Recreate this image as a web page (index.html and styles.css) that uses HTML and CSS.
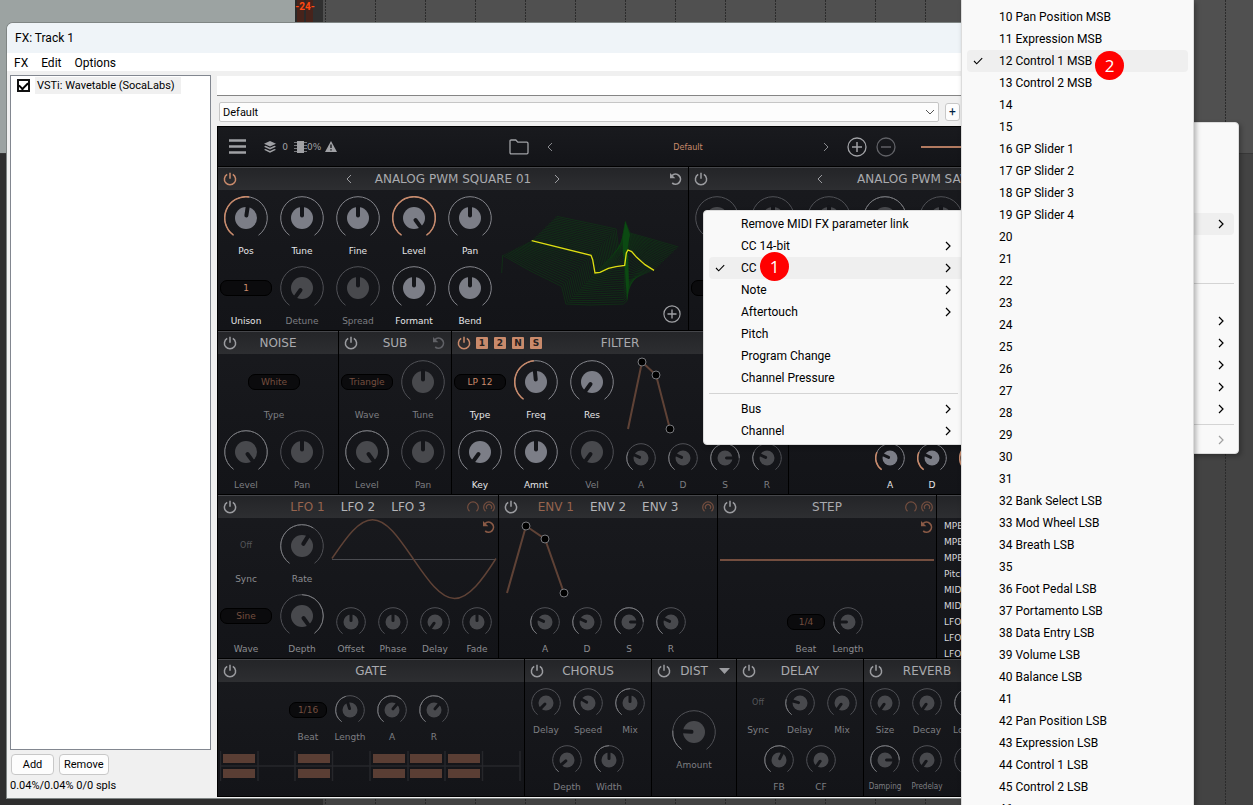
FILE: index.html
```html
<!DOCTYPE html>
<html lang="en">
<head>
<meta charset="utf-8">
<title>FX: Track 1</title>
<link rel="stylesheet" href="styles.css">
</head>
<body>
<svg class="defs" aria-hidden="true">
  <symbol id="power" viewBox="0 0 14 14"><path d="M4.2 2.4a5.6 5.6 0 1 0 5.6 0M7 .8v6" fill="none" stroke="currentColor" stroke-width="1.5"/></symbol>
  <symbol id="reset" viewBox="0 0 14 14"><path d="M3 3.6A5 5 0 1 1 3.2 11" fill="none" stroke="currentColor" stroke-width="1.7"/><path d="M1 1v5.3h5.3z" fill="currentColor"/></symbol>
  <symbol id="left" viewBox="0 0 6 10"><path d="M5 1 1 5l4 4" fill="none" stroke="currentColor"/></symbol>
  <symbol id="right" viewBox="0 0 6 10"><path d="m1 1 4 4-4 4" fill="none" stroke="currentColor"/></symbol>
  <symbol id="chev" viewBox="0 0 6 10"><path d="m1 1 4 4-4 4" fill="none" stroke="currentColor" stroke-width="1.2"/></symbol>
  <symbol id="check" viewBox="0 0 10 8"><path d="m1 4 2.7 2.8L9.2 1.2" fill="none" stroke="currentColor" stroke-width="1.1"/></symbol>
  <symbol id="plus" viewBox="0 0 20 20"><circle cx="10" cy="10" r="9" fill="none" stroke="currentColor" stroke-width="1.3"/><path d="M10 5v10M5 10h10" stroke="currentColor" stroke-width="1.5"/></symbol>
  <symbol id="minus" viewBox="0 0 20 20"><circle cx="10" cy="10" r="9" fill="none" stroke="currentColor" stroke-width="1.3"/><path d="M5 10h10" stroke="currentColor" stroke-width="1.5"/></symbol>
  <symbol id="arc" viewBox="0 0 12 12"><path d="M2.5 10.2a5.3 5.3 0 1 1 7 0" fill="none" stroke="currentColor" stroke-width="1.2"/></symbol>
  <symbol id="arcs" viewBox="0 0 12 12"><path d="M2.5 10.2a5.3 5.3 0 1 1 7 0M4 7.8a2.6 2.6 0 1 1 4 0" fill="none" stroke="currentColor" stroke-width="1.2"/></symbol>
</svg>

<main class="desktop">
  <div class="arrange-top"><div class="mixer"></div><div class="meter"><span>-24-</span></div><div class="lanes"></div></div>
  <div class="arrange-bottom"><div class="tracks"></div><div class="lanes"></div></div>

  <section class="window">
    <header class="titlebar">FX: Track 1</header>
    <nav class="menubar"><button>FX</button><button>Edit</button><button>Options</button></nav>
    <div class="body">
      <aside class="chain">
        <div class="fxlist">
          <label class="fxitem"><input type="checkbox" checked><span>VSTi: Wavetable (SocaLabs)</span></label>
        </div>
        <div class="actions"><button>Add</button><button>Remove</button></div>
        <div class="status">0.04%/0.04% 0/0 spls</div>
      </aside>

      <div class="plugin">
        <input class="comment" type="text" aria-label="Comment">
        <div class="preset">
          <div class="combo"><select aria-label="Preset"><option>Default</option></select><svg viewBox="0 0 10 6"><path d="m1 1 4 4 4-4" fill="none" stroke="#555"/></svg></div>
          <button>+</button>
        </div>

        <div class="synth">
          <div class="topbar">
            <div class="top-left">
              <button class="ico" aria-label="Menu"><svg width="17" height="15" viewBox="0 0 17 15"><path d="M0 1.5h17M0 7.5h17M0 13.5h17" stroke="currentColor" stroke-width="2.4"/></svg></button>
              <svg class="layers" width="12" height="12" viewBox="0 0 12 12" fill="currentColor"><path d="M6 0 12 2.8 6 5.6 0 2.8z"/><path d="m1.6 4.8 4.4 2 4.4-2L12 5.7 6 8.5 0 5.7z"/><path d="m1.6 7.9 4.4 2 4.4-2 1.6.9-6 2.9-6-2.9z"/></svg>
              <span class="num">0</span>
              <svg width="13" height="12" viewBox="0 0 13 12"><path d="M3 0h7v12H3z" fill="currentColor"/><path d="M0 1.5h13M0 4.5h13M0 7.5h13M0 10.5h13" stroke="currentColor" opacity=".7"/></svg>
              <span>0%</span>
              <svg class="warn" width="12" height="11" viewBox="0 0 12 11"><path d="M6 0 12 11H0z" fill="currentColor"/><path d="M6 3.5v3.6M6 8.2v1.4" stroke="#16171b" stroke-width="1.4"/></svg>
            </div>
            <button class="ico" aria-label="Open"><svg width="20" height="16" viewBox="0 0 20 16"><path d="M1 13.5V2.2Q1 1 2.2 1h4.6l2 2.2h9q1.2 0 1.2 1.2v9.2q0 1.2-1.2 1.2H2.2Q1 14.8 1 13.5z" fill="none" stroke="currentColor" stroke-width="1.3"/></svg></button>
            <div class="program"><button class="ico" aria-label="Previous"><svg width="6" height="10"><use href="#left"/></svg></button><span>Default</span><button class="ico" aria-label="Next"><svg width="6" height="10"><use href="#right"/></svg></button></div>
            <button class="ico" aria-label="Add preset"><svg width="20" height="20"><use href="#plus"/></svg></button>
            <button class="ico faint" aria-label="Delete preset"><svg width="20" height="20"><use href="#minus"/></svg></button>
            <div class="volume"></div>
          </div>

          <div class="row row-osc">
            <section class="panel lit">
              <header class="head"><button class="ico hot" aria-label="Power"><svg width="14" height="14"><use href="#power"/></svg></button>
                <div class="wave"><button class="ico" aria-label="Previous"><svg width="6" height="10"><use href="#left"/></svg></button><h2>ANALOG PWM SQUARE 01</h2><button class="ico" aria-label="Next"><svg width="6" height="10"><use href="#right"/></svg></button></div>
                <div class="end"><button class="ico" aria-label="Reset"><svg width="14" height="14"><use href="#reset"/></svg></button></div></header>
              <div class="osc">
                <div class="knobs five">
                  <label class="knob" data-v=".53" data-from="0">Pos</label><label class="knob" data-v=".5">Tune</label><label class="knob" data-v=".5">Fine</label><label class="knob" data-v="1" data-from="0">Level</label><label class="knob" data-v=".5">Pan</label>
                  <div class="choice"><button>1</button><span>Unison</span></div><label class="knob dim" data-v="0">Detune</label><label class="knob dim" data-v=".5">Spread</label><label class="knob" data-v=".5">Formant</label><label class="knob" data-v=".5">Bend</label>
                </div>
                <div class="plot"><svg id="wavetable" width="182" height="104" viewBox="30 250 546 312"></svg><button class="ico more" aria-label="Add"><svg width="18" height="18" viewBox="0 0 20 20"><use href="#plus"/></svg></button></div>
              </div>
            </section>
            <section class="panel">
              <header class="head"><button class="ico" aria-label="Power"><svg width="14" height="14"><use href="#power"/></svg></button>
                <div class="wave"><button class="ico" aria-label="Previous"><svg width="6" height="10"><use href="#left"/></svg></button><h2>ANALOG PWM SAW 01</h2><button class="ico" aria-label="Next"><svg width="6" height="10"><use href="#right"/></svg></button></div><div class="end"></div></header>
              <div class="osc">
                <div class="knobs five">
                  <label class="knob" data-v="0"></label><label class="knob" data-v=".5"></label><label class="knob" data-v=".5"></label><label class="knob" data-v="1" data-from="0"></label><label class="knob" data-v=".5"></label>
                  <div class="choice"><button aria-label="Unison"></button></div>
                </div>
              </div>
            </section>
          </div>

          <div class="row row-filter">
            <section class="panel">
              <header class="head"><button class="ico" aria-label="Power"><svg width="14" height="14"><use href="#power"/></svg></button><h2>NOISE</h2><div class="end"></div></header>
              <div class="knobs pair">
                <div class="choice wide"><button>White</button><span>Type</span></div>
                <label class="knob" data-v="1" data-from="0">Level</label><label class="knob" data-v=".5">Pan</label>
              </div>
            </section>
            <section class="panel">
              <header class="head"><button class="ico" aria-label="Power"><svg width="14" height="14"><use href="#power"/></svg></button><h2>SUB</h2><div class="end"><button class="ico faint" aria-label="Reset"><svg width="14" height="14"><use href="#reset"/></svg></button></div></header>
              <div class="knobs pair">
                <div class="choice"><button>Triangle</button><span>Wave</span></div><label class="knob" data-v=".5">Tune</label>
                <label class="knob" data-v="1" data-from="0">Level</label><label class="knob" data-v=".5">Pan</label>
              </div>
            </section>
            <section class="panel lit">
              <header class="head"><div class="start"><button class="ico hot" aria-label="Power"><svg width="14" height="14"><use href="#power"/></svg></button><button class="route">1</button><button class="route">2</button><button class="route">N</button><button class="route">S</button></div><h2>FILTER</h2><div class="end"></div></header>
              <div class="split">
                <div class="knobs three">
                  <div class="choice"><button>LP 12</button><span>Type</span></div><label class="knob" data-v=".48" data-from="0">Freq</label><label class="knob" data-v="0">Res</label>
                  <label class="knob" data-v="0">Key</label><label class="knob" data-v=".5">Amnt</label><label class="knob dim" data-v="0">Vel</label>
                </div>
                <div class="stack">
                  <svg class="graph" width="168" height="83" viewBox="0 -1 168 83"><path class="env" d="M8 74 22 7 36 20 50 74"/><circle cx="22" cy="7" r="4"/><circle cx="36" cy="20" r="4"/><circle cx="50" cy="74" r="4"/></svg>
                  <div class="smalls"><label class="knob sm dim" data-v=".27" data-from="0">A</label><label class="knob sm dim" data-v=".27" data-from="0">D</label><label class="knob sm dim" data-v=".81" data-from="0">S</label><label class="knob sm dim" data-v=".27" data-from="0">R</label></div>
                </div>
              </div>
            </section>
            <section class="panel lit">
              <header class="head"></header>
              <div class="stack">
                <div class="graph-space"></div>
                <div class="smalls"><label class="knob sm" data-v=".27" data-from="0">A</label><label class="knob sm" data-v=".27" data-from="0">D</label><label class="knob sm" data-v=".81" data-from="0">S</label><label class="knob sm" data-v=".27" data-from="0">R</label></div>
              </div>
            </section>
            <section class="panel"><header class="head"></header></section>
          </div>

          <div class="row row-mod">
            <section class="panel">
              <header class="head"><button class="ico" aria-label="Power"><svg width="14" height="14"><use href="#power"/></svg></button><div class="tabs"><button class="sel">LFO 1</button><button>LFO 2</button><button>LFO 3</button></div><div class="end rust"><svg width="12" height="12"><use href="#arc"/></svg><svg width="12" height="12"><use href="#arcs"/></svg></div></header>
              <div class="split">
                <div class="knobs pair">
                  <div class="choice plain"><button>Off</button><span>Sync</span></div><label class="knob" data-v=".61" data-from="0">Rate</label>
                  <div class="choice"><button>Sine</button><span>Wave</span></div><label class="knob" data-v="1" data-from=".5">Depth</label>
                </div>
                <div class="stack">
                  <svg class="graph" width="168" height="83" viewBox="0 -1 168 83"><path d="M2 40.5h164" stroke="#4a4b50" fill="none"/><path class="env thin" d="M2 39.5C15.4 20 28 .8 42.5.8S69.6 20 83 39.5 110 79.5 124.5 79.5 153 60 166 39.5"/></svg>
                  <div class="smalls"><label class="knob sm" data-v=".5">Offset</label><label class="knob sm" data-v=".5">Phase</label><label class="knob sm" data-v="0">Delay</label><label class="knob sm" data-v=".5">Fade</label></div>
                  <button class="ico again" aria-label="Reset"><svg width="14" height="14"><use href="#reset"/></svg></button>
                </div>
              </div>
            </section>
            <section class="panel">
              <header class="head"><button class="ico" aria-label="Power"><svg width="14" height="14"><use href="#power"/></svg></button><div class="tabs"><button class="sel">ENV 1</button><button>ENV 2</button><button>ENV 3</button></div><div class="end rust"><svg width="12" height="12"><use href="#arcs"/></svg></div></header>
              <div class="stack">
                <svg class="graph" width="168" height="83" viewBox="0 -1 168 83"><path class="env" d="M8 74 27 7 46 20 65 74"/><circle cx="27" cy="7" r="4"/><circle cx="46" cy="20" r="4"/><circle cx="65" cy="74" r="4"/></svg>
                <div class="smalls"><label class="knob sm" data-v=".27" data-from="0">A</label><label class="knob sm" data-v=".27" data-from="0">D</label><label class="knob sm" data-v=".81" data-from="0">S</label><label class="knob sm" data-v=".27" data-from="0">R</label></div>
              </div>
            </section>
            <section class="panel">
              <header class="head"><button class="ico" aria-label="Power"><svg width="14" height="14"><use href="#power"/></svg></button><h2>STEP</h2><div class="end rust"><svg width="12" height="12"><use href="#arc"/></svg><svg width="12" height="12"><use href="#arcs"/></svg></div></header>
              <div class="stack">
                <div class="steps"></div>
                <div class="smalls"><div class="choice sm"><button>1/4</button><span>Beat</span></div><label class="knob sm" data-v=".19" data-from="0">Length</label></div>
                <button class="ico again" aria-label="Reset"><svg width="14" height="14"><use href="#reset"/></svg></button>
              </div>
            </section>
            <section class="panel">
              <header class="head"></header>
              <ul class="matrix"><li>MPE Press</li><li>MPE Slide</li><li>MPE Lift</li><li>Pitch</li><li>MIDI CC</li><li>MIDI Key</li><li>LFO 1</li><li>LFO 2</li><li>LFO 3</li></ul>
            </section>
          </div>

          <div class="row row-fx">
            <section class="panel">
              <header class="head"><button class="ico" aria-label="Power"><svg width="14" height="14"><use href="#power"/></svg></button><h2>GATE</h2><div class="end"></div></header>
              <div class="gate">
                <div class="smalls"><div class="choice sm"><button>1/16</button><span>Beat</span></div><label class="knob sm" data-v=".44" data-from="0">Length</label><label class="knob sm" data-v=".64" data-from="0">A</label><label class="knob sm" data-v=".64" data-from="0">R</label></div>
                <svg width="301" height="30" viewBox="0 0 301 30"><path d="M0 15h300M.5 0v30M38 0v30M75 0v30M112.5 0v30M150 0v30M188 0v30M225 0v30M262.5 0v30M300 0v30" stroke="#26272b" stroke-width="1.5"/><path d="M3 3h32v9H3zM3 18h32v9H3zM78 3h32v9H78zM78 18h32v9H78zM153 3h32v9h-32zM153 18h32v9h-32zM190 3h32v9h-32zM190 18h32v9h-32zM228 3h32v9h-32zM228 18h32v9h-32z" fill="#5a3e34"/></svg>
              </div>
            </section>
            <section class="panel">
              <header class="head"><button class="ico" aria-label="Power"><svg width="14" height="14"><use href="#power"/></svg></button><h2>CHORUS</h2><div class="end"></div></header>
              <div class="smalls"><label class="knob sm" data-v=".03">Delay</label><label class="knob sm" data-v=".29" data-from="0">Speed</label><label class="knob sm" data-v=".5" data-from="0">Mix</label></div>
              <div class="smalls"><label class="knob sm" data-v=".05" data-from="0">Depth</label><label class="knob sm" data-v=".5" data-from="0">Width</label></div>
            </section>
            <section class="panel">
              <header class="head tight"><button class="ico" aria-label="Power"><svg width="14" height="14"><use href="#power"/></svg></button><h2>DIST</h2><button class="ico" aria-label="Type"><svg width="11" height="6" viewBox="0 0 11 6"><path d="M0 0h11L5.5 6z" fill="currentColor"/></svg></button></header>
              <div class="solo"><label class="knob" data-v=".2" data-from="0">Amount</label></div>
            </section>
            <section class="panel">
              <header class="head"><button class="ico" aria-label="Power"><svg width="14" height="14"><use href="#power"/></svg></button><h2>DELAY</h2><div class="end"></div></header>
              <div class="smalls"><div class="choice sm plain"><button>Off</button><span>Sync</span></div><label class="knob sm" data-v=".24" data-from="0">Delay</label><label class="knob sm" data-v="0">Mix</label></div>
              <div class="smalls"><label class="knob sm" data-v=".59" data-from="0">FB</label><label class="knob sm" data-v="0">CF</label></div>
            </section>
            <section class="panel">
              <header class="head"><button class="ico" aria-label="Power"><svg width="14" height="14"><use href="#power"/></svg></button><h2>REVERB</h2><div class="end"></div></header>
              <div class="smalls"><label class="knob sm" data-v="0">Size</label><label class="knob sm" data-v="0">Decay</label><label class="knob sm" data-v="1" data-from="0">Lowcut</label></div>
              <div class="smalls"><label class="knob sm narrow" data-v=".81" data-from="0">Damping</label><label class="knob sm narrow" data-v="0">Predelay</label><label class="knob sm" data-v="0"></label></div>
            </section>
            <section class="panel"><header class="head"></header></section>
          </div>
        </div>
      </div>
    </div>
  </section>

  <ul class="menu menu-root" role="menu">
    <li></li><li></li><li></li><li></li><li class="hover"><svg class="sub"><use href="#chev"/></svg></li><li></li><li></li>
    <li class="sep"></li>
    <li></li><li><svg class="sub"><use href="#chev"/></svg></li><li><svg class="sub"><use href="#chev"/></svg></li><li><svg class="sub"><use href="#chev"/></svg></li><li><svg class="sub"><use href="#chev"/></svg></li><li><svg class="sub"><use href="#chev"/></svg></li>
    <li class="sep"></li>
    <li class="off"><svg class="sub"><use href="#chev"/></svg></li>
  </ul>

  <ul class="menu menu-link" role="menu">
    <li><button>Remove MIDI FX parameter link</button></li>
    <li><button>CC 14-bit</button><svg class="sub"><use href="#chev"/></svg></li>
    <li class="hover"><svg class="tick"><use href="#check"/></svg><button>CC</button><svg class="sub"><use href="#chev"/></svg></li>
    <li><button>Note</button><svg class="sub"><use href="#chev"/></svg></li>
    <li><button>Aftertouch</button><svg class="sub"><use href="#chev"/></svg></li>
    <li><button>Pitch</button></li>
    <li><button>Program Change</button></li>
    <li><button>Channel Pressure</button></li>
    <li class="sep"></li>
    <li><button>Bus</button><svg class="sub"><use href="#chev"/></svg></li>
    <li><button>Channel</button><svg class="sub"><use href="#chev"/></svg></li>
  </ul>

  <ul class="menu menu-cc" role="menu">
    <li><button>10 Pan Position MSB</button></li>
    <li><button>11 Expression MSB</button></li>
    <li class="hover"><svg class="tick"><use href="#check"/></svg><button>12 Control 1 MSB</button></li>
    <li><button>13 Control 2 MSB</button></li>
    <li><button>14</button></li>
    <li><button>15</button></li>
    <li><button>16 GP Slider 1</button></li>
    <li><button>17 GP Slider 2</button></li>
    <li><button>18 GP Slider 3</button></li>
    <li><button>19 GP Slider 4</button></li>
    <li><button>20</button></li>
    <li><button>21</button></li>
    <li><button>22</button></li>
    <li><button>23</button></li>
    <li><button>24</button></li>
    <li><button>25</button></li>
    <li><button>26</button></li>
    <li><button>27</button></li>
    <li><button>28</button></li>
    <li><button>29</button></li>
    <li><button>30</button></li>
    <li><button>31</button></li>
    <li><button>32 Bank Select LSB</button></li>
    <li><button>33 Mod Wheel LSB</button></li>
    <li><button>34 Breath LSB</button></li>
    <li><button>35</button></li>
    <li><button>36 Foot Pedal LSB</button></li>
    <li><button>37 Portamento LSB</button></li>
    <li><button>38 Data Entry LSB</button></li>
    <li><button>39 Volume LSB</button></li>
    <li><button>40 Balance LSB</button></li>
    <li><button>41</button></li>
    <li><button>42 Pan Position LSB</button></li>
    <li><button>43 Expression LSB</button></li>
    <li><button>44 Control 1 LSB</button></li>
    <li><button>45 Control 2 LSB</button></li>
    <li><button>46</button></li>
  </ul>

  <span class="badge step-one">1</span>
  <span class="badge step-two">2</span>
</main>
<script src="synth.js"></script>
</body>
</html>
```

FILE: styles.css
```css
* { box-sizing: border-box; }
body { margin: 0; font-family: Roboto, "Open Sans", sans-serif; font-size: 12px; color: #000; }
button { font: inherit; color: inherit; background: none; border: 0; padding: 0; }
ul { list-style: none; margin: 0; padding: 0; }
h2 { margin: 0; font: inherit; }
.defs { position: absolute; width: 0; height: 0; }

/* arrange view behind the window */
.desktop { position: relative; height: 100vh; overflow: hidden; display: flex; flex-direction: column; background: #434343; }
.arrange-top { display: flex; height: 153px; background: #505050; }
.arrange-bottom { display: flex; flex: 1; border-top: 1px solid #383838; }
.mixer { width: 295px; background: #9ca3a2; }
.meter { width: 28px; background: linear-gradient(90deg, #292929 2px, #47231b 2px 9px, #292929 9px 11px, #47231b 11px 18px, #303030 18px); color: #ff4a12; font-size: 10px; font-weight: 700; line-height: 13px; }
.meter span { display: block; width: 20px; text-align: center; }
.tracks { width: 323px; background: #2e2e2e; }
.lanes { flex: 1; background: repeating-linear-gradient(90deg, transparent 0 2px, #2b2b2b 2px 3px, transparent 3px 50px); mask: repeating-linear-gradient(#000 0 2px, transparent 2px 3px); }

/* FX window */
.window { position: absolute; left: 7px; top: 23px; right: 94px; background: #f0f0f0; border-radius: 6px 6px 0 0; overflow: hidden; box-shadow: 0 0 0 1px #7f8584; }
.titlebar { height: 30px; line-height: 30px; padding-left: 8px; background: #eff4f8; }
.menubar { display: flex; gap: 13px; height: 18px; padding: 1px 0 0 7px; background: #fff; line-height: 18px; }
.body { display: flex; padding: 4px 0 1px 3px; }
.chain { width: 201px; display: flex; flex-direction: column; font-size: 11px; }
.fxlist { flex: 1; background: #fff; border: 1px solid #828790; padding: 1px 6px; }
.fxitem { display: flex; align-items: center; gap: 5px; }
.fxitem input { appearance: none; display: grid; place-items: center; width: 13px; height: 13px; margin: 0; border: 2px solid #111; background: #fff; }
.fxitem input:checked::before { content: ""; width: 7px; height: 4px; margin-top: -2px; border-left: 2px solid #000; border-bottom: 2px solid #000; transform: rotate(-45deg); }
.fxitem span { background: #f0f0f0; line-height: 17px; padding: 0 6px 0 2px; }
.actions { display: flex; gap: 5px; padding: 4px 1px; }
.actions button { height: 21px; min-width: 43px; padding: 0 4px; background: #fdfdfd; border: 1px solid #c8c8c8; border-radius: 4px; }
.actions button + button { min-width: 48px; }
.status { line-height: 14px; padding-bottom: 4px; }
.plugin { flex: 1; min-width: 0; margin-left: 6px; }
.comment { display: block; width: 100%; height: 20px; margin-top: 1px; border: 0; border-bottom: 1px solid #858585; background: #fff; padding: 0 4px; }
.preset { display: flex; gap: 6px; padding: 6px 199px 4px 2px; }
.combo { position: relative; flex: 1; height: 20px; }
.combo select { appearance: none; width: 100%; height: 20px; padding: 0 3px; background: #fdfdfd; border: 1px solid #c6c6c6; border-radius: 2px; font: 11px Roboto, sans-serif; color: #000; }
.combo svg { position: absolute; right: 4px; top: 7px; width: 10px; height: 6px; }
.preset button { width: 15px; height: 18px; margin-top: 1px; background: #fdfdfd; border: 1px solid #c8c8c8; border-radius: 3px; line-height: 12px; color: #024; }

/* synth */
.synth { --hot: #c98a6b; --rust: #744e3f; color: #a0a1a5; background: #000; padding: 1px 0 1px 1px; display: grid; gap: 1px; font-family: "DejaVu Sans", sans-serif; font-size: 9px; overflow: hidden; }
.ico { display: grid; place-items: center; }
.ico svg { display: block; }
.hot { color: var(--hot); }
.faint { color: #606166; }
.topbar { display: flex; align-items: center; height: 39px; background: linear-gradient(#191a1e, #131418); }
.top-left { display: flex; align-items: center; width: 291px; padding-left: 11px; }
.layers { margin-left: 18px; }
.num { width: 18px; text-align: center; }
.warn { margin-left: 4px; }
.program { display: flex; align-items: center; justify-content: space-between; width: 282px; margin: 0 18px; color: #88898d; }
.program span { color: var(--hot); font-family: "DejaVu Sans Condensed", "DejaVu Sans", sans-serif; }
.topbar .faint { margin-left: 9px; }
.volume { width: 100px; height: 2px; margin-left: 25px; background: #b27a60; }
.row { display: grid; gap: 1px; }
.row-osc { grid-template-columns: 470px 1fr; }
.row-filter { grid-template-columns: 120px 112px 336px 328px 1fr; }
.row-mod { grid-template-columns: 280px 218px 218px 1fr; }
.row-fx { grid-template-columns: 306px 126px 84px 126px 126px 1fr; }
.panel { background: linear-gradient(#191a1e, #131418); min-width: 0; overflow: hidden; }
.head { display: grid; grid-template-columns: 1fr auto 1fr; align-items: center; justify-items: start; height: 23px; padding: 0 5px; background: linear-gradient(#242528, #2d2e31); border-top: 1px solid #45464a; color: #9b9ca0; font-size: 12px; }
.head h2 { color: #a9aaae; white-space: nowrap; }
.end { justify-self: end; display: flex; gap: 4px; }
.head .rust { color: var(--rust); margin-right: -2px; }
.start { display: flex; align-items: center; gap: 6px; }
.start .ico { margin-right: -1px; }
.route { width: 12px; height: 12px; background: #c98a6b; border-radius: 1px; color: #26211f; font-size: 9px; font-weight: 700; line-height: 12px; }
.tight { grid-template-columns: 14px 1fr 14px; justify-items: center; }
.wave { display: flex; align-items: center; justify-content: space-between; width: 214px; }
.tabs { display: flex; gap: 16px; color: #b4b5b9; }
.tabs .sel { color: #96644e; }
.osc, .split { display: flex; }
.knobs { display: grid; grid-auto-rows: 70px; }
.five { grid-template-columns: repeat(5, 56px); }
.three { grid-template-columns: repeat(3, 56px); }
.pair { grid-template-columns: repeat(2, 56px); }
.knob, .choice { display: flex; flex-direction: column; align-items: center; height: 70px; padding-top: 6px; line-height: 14px; color: #7d7e82; white-space: nowrap; }
.knob svg { display: block; margin-bottom: 4px; }
.knob.sm, .choice.sm { width: 42px; height: 57px; }
.knob.sm svg { margin-bottom: 5px; }
.knob.narrow { font-family: "DejaVu Sans Condensed", "DejaVu Sans", sans-serif; font-size: 8px; }
.knob input { position: absolute; opacity: 0; width: 1px; height: 1px; margin: 0; pointer-events: none; }
.knob .ring { fill: none; stroke: #505156; stroke-width: 1; }
.knob .arc { fill: none; stroke: #77787c; stroke-width: 1; }
.knob .cap { fill: #48494d; }
.knob .hand { stroke: #15161a; stroke-width: 4; stroke-linecap: round; }
.knob.sm .hand { stroke-width: 3; }
.row-mod .knob, .row-mod .choice { color: #8c8d91; }
.lit .knob:not(.dim), .lit .choice { color: #e6e6e8; }
.lit .knob:not(.dim) .ring { stroke: #85868c; }
.lit .knob:not(.dim) .arc { stroke: var(--hot); stroke-width: 1.5; }
.lit .knob:not(.dim) .cap { fill: #7c7e87; }
.choice button { width: 52px; height: 16px; margin: 14px 0 18px; background: #0b0b0d; border: 1px solid #000; border-radius: 7px; color: var(--rust); line-height: 14px; }
.choice.wide { grid-column: span 2; }
.choice.sm button { width: 38px; margin: 7px 0 12px; }
.choice.plain button { background: none; border-color: transparent; color: #55565a; font-size: 8px; }
.lit .choice button { color: var(--hot); }
.plot { position: relative; flex: 1; padding: 18px 0 0 2px; }
.plot svg { display: block; }
.more { position: absolute; right: 7px; bottom: 7px; }
.mesh { fill: none; stroke: #0d4412; stroke-width: 1.5; }
.peak { fill: #0b4a12; }
.slice { fill: none; stroke: #dede12; stroke-width: 4; }
.stack { position: relative; flex: 1; display: flex; flex-direction: column; }
.graph { display: block; overflow: visible; }
.graph circle { fill: #000; stroke: #77787c; }
.env { fill: none; stroke: #5f4236; stroke-width: 2; }
.thin { stroke-width: 1.5; }
.graph-space, .steps { height: 83px; }
.steps { margin: 0 2px; background: linear-gradient(var(--rust), var(--rust)) no-repeat 0 41px / 100% 2px; }
.smalls { display: flex; justify-content: center; }
.again { position: absolute; right: 2px; top: 2px; color: #8a5a46; }
.matrix { height: 140px; padding: 0 7px; color: #d8d8da; line-height: 16px; overflow: hidden; }
.gate { padding: 7px 2px 0; }
.gate > svg { display: block; margin-top: 5px; }
.solo { display: flex; justify-content: center; padding-top: 22px; height: 114px; }

/* menus */
.menu { position: absolute; background: #f9f9f9; border: 1px solid #dcdcdc; border-radius: 4px; padding: 2px 5px; box-shadow: 2px 2px 5px rgba(0, 0, 0, .3); }
.menu li { position: relative; display: flex; align-items: center; height: 22px; padding-left: 32px; border-radius: 4px; }
.menu li.hover { background: #efefef; }
.menu li.off { color: #a0a0a0; }
.menu button { text-align: left; white-space: nowrap; }
.menu li.sep { height: 9px; padding: 0; }
.menu li.sep::before { content: ""; flex: 1; height: 1px; background: #d4d4d4; }
.tick { position: absolute; left: 6px; top: 7px; width: 10px; height: 8px; }
.sub { width: 6px; height: 10px; margin-left: auto; }
.menu-root { left: 970px; right: 14px; top: 122px; padding-right: 4px; }
.menu-root .sub { margin-right: 10px; }
.menu-link { left: 703px; top: 210px; width: 262px; padding-right: 6px; }
.menu-link .sub { margin-right: 7px; }
.menu-link .hover { margin-right: -6px; }
.menu-link .hover .sub { margin-right: 13px; }
.menu-cc { left: 961px; top: 0; bottom: 0; width: 233px; border-width: 0 1px; border-radius: 0; padding-top: 6px; overflow: hidden; }
.badge { position: absolute; display: grid; place-items: center; width: 29px; height: 29px; border-radius: 50%; background: #f00; color: #fff; font: 17px "Open Sans", sans-serif; }
.step-one { left: 760px; top: 252px; }
.step-two { left: 1095px; top: 51px; }
```

FILE: synth.js
```js
const SWEEP = 144;
const point = (r, v) => {
  const a = (-SWEEP + 2 * SWEEP * v) * Math.PI / 180;
  return [r * Math.sin(a), -r * Math.cos(a)].map(n => n.toFixed(2));
};
const arc = (r, from, to) =>
  `M${point(r, from)}A${r} ${r} 0 ${(to - from) * 2 * SWEEP > 180 ? 1 : 0} 1 ${point(r, to)}`;

document.querySelectorAll('.knob').forEach(knob => {
  const small = knob.classList.contains('sm');
  const half = small ? 15 : 22;
  const cap = small ? 7.5 : 11;
  const v = Number(knob.dataset.v);
  const from = knob.dataset.from;
  const [x1, y1] = point(small ? 1.5 : 2.5, v);
  const [x2, y2] = point(cap, v);
  const value = from === undefined ? '' : `<path class="arc" d="${arc(half - 0.7, Number(from), v)}"/>`;
  knob.innerHTML = `<input type="range" min="0" max="1" step="0.01" value="${v}">
    <svg width="${half * 2}" height="${half * 2}" viewBox="${-half} ${-half} ${half * 2} ${half * 2}">
    <path class="ring" d="${arc(half - 0.7, 0, 1)}"/>${value}
    <circle class="cap" r="${cap}"/><path class="hand" d="M${x1} ${y1}L${x2} ${y2}"/></svg>
    <span>${knob.textContent}</span>`;
});

/* wavetable surface: rows blended from the back edge, the middle and the front edge */
const back = [[200, 275], [290, 294], [378, 313], [386, 372], [396, 345], [406, 290], [420, 325], [490, 345], [565, 367]];
const mid = [[125, 348], [215, 368], [303, 392], [315, 445], [378, 426], [404, 422], [414, 376], [450, 408], [492, 437]];
const front = [[38, 392], [120, 438], [215, 485], [228, 538], [300, 541], [400, 538], [411, 528], [414, 500], [420, 465]];
const rows = 34;
let mesh = '';
for (let i = 0; i <= rows; i++) {
  const t = i / rows;
  const [a, b, k] = t < 0.5 ? [back, mid, t * 2] : [mid, front, t * 2 - 1];
  mesh += 'M' + a.map((p, n) => `${(p[0] + (b[n][0] - p[0]) * k).toFixed(1)} ${(p[1] + (b[n][1] - p[1]) * k).toFixed(1)}`).join('L');
}
document.getElementById('wavetable').innerHTML =
  `<path class="mesh" d="${mesh}M38 392L35 445"/>
   <path class="peak" d="M406 290L420 330 412 376 404 422 398 380 398 340z"/>
   <path class="peak" d="M404 422L414 376 417 480 411 528z"/>
   <path class="slice" d="M125 348L303 392 308 405 315 445 330 443 355 431 378 426 404 422 409 385 414 376 425 381 440 398 465 420 492 437"/>`;
```
